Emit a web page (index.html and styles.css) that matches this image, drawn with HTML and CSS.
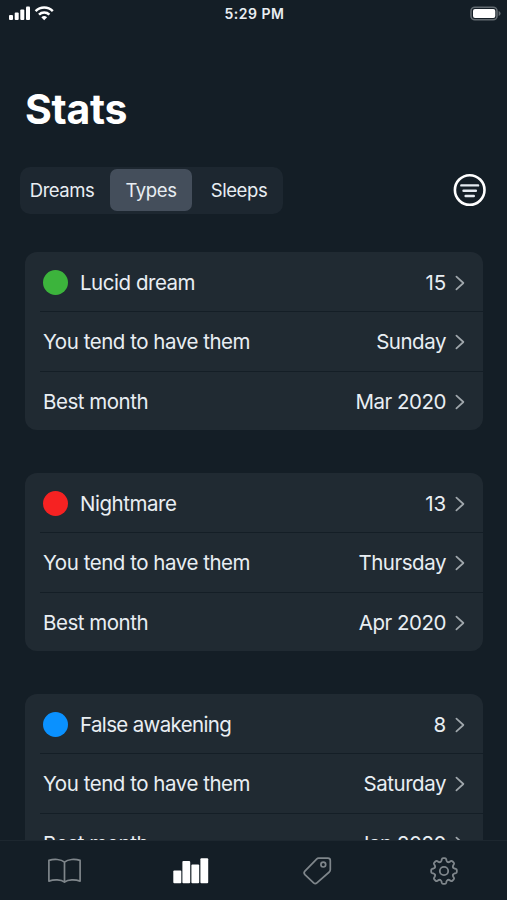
FILE: index.html
```html
<!DOCTYPE html>
<html lang="en">
<head>
<meta charset="utf-8">
<title>Stats</title>
<link rel="stylesheet" href="styles.css">
</head>
<body>
<svg class="defs" width="0" height="0" aria-hidden="true">
  <symbol id="chevron" viewBox="0 0 10 16"><path d="M1.4 1.6 8.4 8 1.4 14.4" fill="none" stroke="currentColor" stroke-width="1.7" stroke-linecap="round" stroke-linejoin="round"/></symbol>
</svg>
<div class="app">
  <header class="status">
    <svg class="signal" width="46" height="16" viewBox="0 0 46 16" fill="#fff">
      <rect x="1" y="9" width="4" height="5" rx="1"/><rect x="6.7" y="6.5" width="4" height="7.5" rx="1"/><rect x="12.3" y="3.5" width="4" height="10.5" rx="1"/><rect x="18" y=".5" width="4" height="13.5" rx="1"/>
      <g fill="none" stroke="#fff" stroke-width="2.5"><path d="M27.6 5.1a12.3 12.3 0 0 1 17.2 0"/><path d="M31 8.7a7.4 7.4 0 0 1 10.4 0"/></g>
      <path d="M33.3 11.3a4.2 4.2 0 0 1 5.8 0L36.2 14.3Z"/>
    </svg>
    <span class="time">5:29 PM</span>
    <svg class="battery" width="31" height="16" viewBox="0 0 31 16">
      <rect x="1" y="1.2" width="26" height="12.6" rx="3.8" fill="none" stroke="#626a70" stroke-width="1.6"/>
      <rect x="3" y="3.1" width="22.3" height="8.9" rx="2" fill="#fff"/>
      <path d="M28.6 5.1q2 .8 2 2.4t-2 2.4z" fill="#626a70"/>
    </svg>
  </header>
  <h1>Stats</h1>
  <div class="toolbar">
    <nav class="segments"><span class="first">Dreams</span><span class="selected">Types</span><span>Sleeps</span></nav>
    <svg class="filter" width="34" height="34" viewBox="0 0 34 34" fill="none" stroke="#fff">
      <circle cx="16.7" cy="17" r="14.8" stroke-width="2.6"/><path d="M8.3 12.4h16.8M10.5 17.8h12.4M12.6 23h8.2" stroke-width="2.4" stroke-linecap="round" stroke="#e4eaf0"/>
    </svg>
  </div>
  <main>
    <section class="card">
      <div class="row"><i class="dot green"></i><span>Lucid dream</span><b class="count">15</b><svg class="chev"><use href="#chevron"/></svg></div>
      <div class="row"><span>You tend to have them</span><b>Sunday</b><svg class="chev"><use href="#chevron"/></svg></div>
      <div class="row"><span>Best month</span><b>Mar 2020</b><svg class="chev"><use href="#chevron"/></svg></div>
    </section>
    <section class="card">
      <div class="row"><i class="dot red"></i><span>Nightmare</span><b class="count">13</b><svg class="chev"><use href="#chevron"/></svg></div>
      <div class="row"><span>You tend to have them</span><b>Thursday</b><svg class="chev"><use href="#chevron"/></svg></div>
      <div class="row"><span>Best month</span><b>Apr 2020</b><svg class="chev"><use href="#chevron"/></svg></div>
    </section>
    <section class="card">
      <div class="row"><i class="dot blue"></i><span class="tight">False awakening</span><b class="count">8</b><svg class="chev"><use href="#chevron"/></svg></div>
      <div class="row"><span>You tend to have them</span><b>Saturday</b><svg class="chev"><use href="#chevron"/></svg></div>
      <div class="row"><span>Best month</span><b>Jan 2020</b><svg class="chev"><use href="#chevron"/></svg></div>
    </section>
  </main>
  <footer class="tabs">
    <svg width="36" height="30" viewBox="0 0 36 30" fill="none" stroke="#7f868b" stroke-width="1.7" stroke-linejoin="round">
      <path d="M18.5 6.1C14.9 3 8 2.8 2.9 4.4V25.1C8 23.4 14.9 23.4 18.5 26.2C22.1 23.4 29 23.4 34.1 25.1V4.4C29 2.8 22.1 3 18.5 6.1ZM18.5 6.1V26.2"/>
    </svg>
    <svg width="36" height="30" viewBox="0 0 36 30" fill="#fff">
      <rect x=".3" y="14.5" width="8" height="12.8" rx="1"/><rect x="9.4" y="5" width="7.8" height="22.3" rx="1"/><rect x="18.4" y="8.6" width="7.8" height="18.7" rx="1"/><rect x="27.4" y="2.2" width="7.8" height="25.1" rx="1"/>
    </svg>
    <svg width="36" height="30" viewBox="0 0 36 30" fill="none" stroke="#7f868b" stroke-width="1.7" stroke-linejoin="round">
      <path d="M19.7 2.2H28.9Q31.3 2.2 31.3 4.6V13.6Q31.3 15 30.3 16L17.9 26.9Q16.3 28.4 14.6 26.9L5.9 18.6Q4.3 16.9 5.9 15.2L17.6 3.1Q18.5 2.2 19.7 2.2Z"/><circle cx="24.3" cy="8.6" r="2.4"/>
    </svg>
    <svg width="36" height="30" viewBox="-18 -15 36 30" fill="none" stroke="#7f868b" stroke-width="1.8" stroke-linecap="round" stroke-linejoin="round">
      <defs><path id="tooth" d="M-3.75-9.05Q-2.8-9.2-2.5-10.4L-2.2-11.8Q-1.9-12.8-1-12.8H1Q1.9-12.8 2.2-11.8L2.5-10.4Q2.8-9.2 3.75-9.05"/></defs>
      <use href="#tooth"/><use href="#tooth" transform="rotate(45)"/><use href="#tooth" transform="rotate(90)"/><use href="#tooth" transform="rotate(135)"/><use href="#tooth" transform="rotate(180)"/><use href="#tooth" transform="rotate(225)"/><use href="#tooth" transform="rotate(270)"/><use href="#tooth" transform="rotate(315)"/>
      <circle r="4.2"/>
    </svg>
  </footer>
</div>
</body>
</html>
```
FILE: styles.css
```css
* { box-sizing: border-box; }
body { margin: 0; background: #141e26; color: #e9eef3; font-family: Inter, "Liberation Sans", sans-serif; }
.defs { display: block; }
.app { height: 900px; overflow: hidden; display: flex; flex-direction: column; }
.status { height: 28px; flex: none; display: grid; grid-template-columns: 1fr auto 1fr; align-items: center; padding: 0 6px 1px 8px; }
.battery { justify-self: end; }
.time { font-size: 14px; font-weight: 600; letter-spacing: .5px; line-height: 26px; }
h1 { margin: 56px 0 0 25px; font-size: 41px; line-height: 50px; height: 50px; font-weight: 700; letter-spacing: -.3px; color: #fff; flex: none; }
.toolbar { display: flex; align-items: center; justify-content: space-between; height: 46px; margin: 33px 20px 0 20px; flex: none; }
.segments { display: grid; grid-template-columns: 84px 89px 87px; width: 263px; height: 47px; padding: 1px 2px 2px; border-radius: 10px; background: #1d2730; font-size: 18.5px; letter-spacing: -.4px; }
.segments span { display: flex; align-items: center; justify-content: center; margin: 1px 3px 1px 4px; border-radius: 7px; }
.segments .first { margin: 1px 4px 1px 0; letter-spacing: -.5px; }
.segments .selected { background: #444e5b; }
main { flex: 1; min-height: 0; overflow: hidden; padding: 39px 24px 0 25px; display: flex; flex-direction: column; gap: 43px; }
.card { flex: none; border-radius: 12px; background: #202a32; height: 178px; display: grid; grid-template-rows: repeat(3, 1fr); padding-left: 15px; }
.row { display: flex; align-items: center; padding: 2px 18px 0 3px; font-size: 20.5px; line-height: 28px; letter-spacing: -.47px; white-space: nowrap; }
.row + .row { border-top: 1px solid #141e26; padding-top: 2px; }
.row b { margin-left: auto; font-weight: 400; }
.row .count { letter-spacing: -.1px; }
.row .tight { letter-spacing: -.65px; }
.chev { width: 10px; height: 16px; margin-left: 9px; color: #a0a7ac; flex: none; }
.dot { width: 25px; height: 25px; border-radius: 50%; margin: -1px 12px 0 0; }
.green { background: #3cb43c; }
.red { background: #f62222; }
.blue { background: #0a91ff; }
.tabs { flex: none; height: 60px; border-top: 1px solid #1d272f; display: flex; justify-content: space-between; padding: 15px 45px 0 46px; background: #141e26; }
.tabs svg { display: block; }
```
